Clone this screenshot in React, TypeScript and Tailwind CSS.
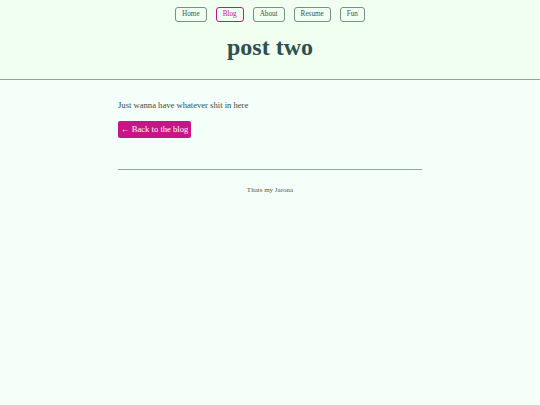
export default function App() {
  const links = ['Home', 'Blog', 'About', 'Resume', 'Fun'];

  return (
    <div className="min-h-[405px] bg-[#f5fffa] font-['Liberation_Serif',serif] text-[#2f4f4f]">
      <header className="border-b border-[#8fa89a] bg-[#f0fff0] pt-[7px] pb-[18px]">
        <nav className="flex justify-center gap-[9px]">
          {links.map((link) => (
            <a
              key={link}
              className={
                link === 'Blog'
                  ? 'flex h-[15px] items-center rounded-[3px] border border-[#c71585] px-[6px] text-[7.2px] text-[#c71585]'
                  : 'flex h-[15px] items-center rounded-[3px] border border-[#7a8f86] px-[6px] text-[7.2px] text-[#3d5552]'
              }
            >
              {link}
            </a>
          ))}
        </nav>
        <h1 className="mt-[11px] text-center text-[24px] leading-[28px] font-bold">post two</h1>
      </header>
      <main className="mx-auto w-[304px] pt-[19px]">
        <p className="text-[8.6px] leading-[12px]">Just wanna have whatever shit in here</p>
        <a className="mt-[10px] inline-flex h-[17px] items-center rounded-[2px] bg-[#c71585] px-[3px] text-[8.6px] text-white">
          ← Back to the blog
        </a>
        <hr className="mt-[30px] border-[#8fa89a]" />
        <footer className="pt-[15px] text-center text-[7px] text-[#555]">Thats my Jarona</footer>
      </main>
    </div>
  );
}
